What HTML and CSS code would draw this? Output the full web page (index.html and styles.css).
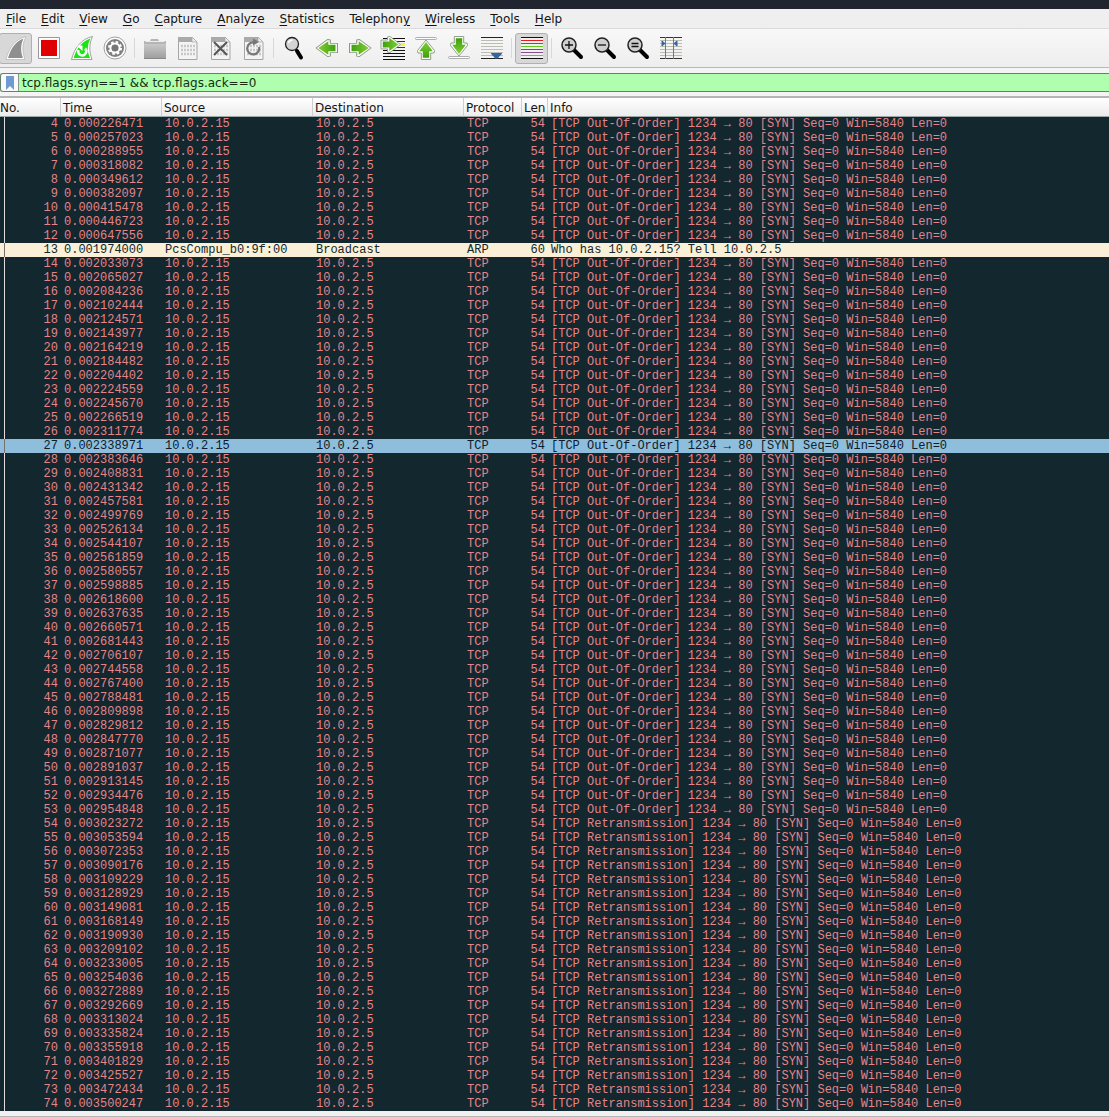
FILE: index.html
```html
<!DOCTYPE html>
<html lang="en">
<head>
<meta charset="utf-8">
<title>Capture</title>
<link rel="stylesheet" href="styles.css">
</head>
<body>
<div class="titlebar"></div>
<nav class="menubar">
  <button><u>F</u>ile</button>
  <button><u>E</u>dit</button>
  <button><u>V</u>iew</button>
  <button><u>G</u>o</button>
  <button><u>C</u>apture</button>
  <button><u>A</u>nalyze</button>
  <button><u>S</u>tatistics</button>
  <button>Telephon<u>y</u></button>
  <button><u>W</u>ireless</button>
  <button><u>T</u>ools</button>
  <button><u>H</u>elp</button>
</nav>
<svg class="defs" width="0" height="0" aria-hidden="true">
  <defs>
    <linearGradient id="green" x1="0" y1="0" x2="0" y2="1"><stop offset="0" stop-color="#7fd035"/><stop offset="1" stop-color="#3f9f0c"/></linearGradient>
    <linearGradient id="folder" x1="0" y1="0" x2="0" y2="1"><stop offset="0" stop-color="#c9c9c9"/><stop offset="1" stop-color="#9c9c9c"/></linearGradient>
    <g id="arrow">
      <path d="M0 -10 L10 0.5 L9.500 3 H5.5 V9.5 H-5.5 V3 H-9.500 L-10 0.5 Z" fill="#fff" stroke="#8a9880" stroke-width="1" stroke-linejoin="round"/>
      <path d="M0 -8 L8 1.200 H3.8 V7.7 H-3.8 V1.200 H-8 Z" fill="url(#green)"/>
    </g>
    <g id="page">
      <path d="M7.5 4.500H21l5 5V26.500H7.500Z" fill="#f4f4f4" stroke="#a5a5a5"/>
      <path d="M7 4h14l5 5H7Z" fill="#aaa"/>
      <path d="M21 4v5h5Z" fill="#eee" stroke="#a5a5a5" stroke-width=".7"/>
      <path d="M10 13h14M10 17h14M10 21h14" stroke="#c8c8c8" stroke-width="2.500" stroke-dasharray="2 1"/>
    </g>
    <g id="lens">
      <path d="M19 17l7 7" stroke="#000" stroke-width="4" stroke-linecap="round"/>
      <circle cx="14" cy="12" r="7" fill="#cfcfcf" stroke="#222" stroke-width="1.500"/>
    </g>
  </defs>
</svg>
<div class="toolbar" role="toolbar">
  <button class="on" aria-label="Start capture"><svg viewBox="0 0 33 30"><path d="M7 26.500C10 15 16 6 27 3.500C23 11 23 18 26 26.500Z" fill="#fff" stroke="#aaa" stroke-width=".6"/><path d="M9 25C12 15 17 8 24.500 5.500C21.500 12 21.500 18 24 25Z" fill="#8f8f8f"/></svg></button>
  <button aria-label="Stop capture"><svg viewBox="0 0 33 30"><path d="M6.500 4.500h21v21h-21Z" fill="#fff" stroke="#999"/><path d="M9 7h16v16H9Z" fill="#e00000"/></svg></button>
  <button aria-label="Restart capture"><svg viewBox="0 0 33 30"><path d="M6.500 26.500C9.500 15 16 6 27.500 3.500C24 11 24 18 27 26.500Z" fill="#fff" stroke="#8a8a8a" stroke-width=".8"/><path d="M8.500 25C12 15 17 8 25.500 5.500C22 12 22 18 25 25Z" fill="#18e610"/><path d="M20 15.500A4 4 0 1 1 13.500 17" fill="none" stroke="#fff" stroke-width="2.500"/><path d="M11.500 12.500h6v5.500Z" fill="#fff"/></svg></button>
  <button aria-label="Capture options"><svg viewBox="0 0 33 30"><circle cx="17" cy="15" r="11" fill="#fff" stroke="#a0a0a0"/><circle cx="17" cy="15" r="9" fill="#808080"/><circle cx="17" cy="15" r="5.500" fill="none" stroke="#fff" stroke-width="3" stroke-dasharray="2.300 2.019"/><circle cx="17" cy="15" r="4.500" fill="none" stroke="#fff" stroke-width="2"/><circle cx="17" cy="15" r="3.300" fill="#777"/></svg></button>
  <span class="sep"></span>
  <button aria-label="Open"><svg viewBox="0 0 33 30"><path d="M6 8h6l1-2h7l1 2h7v18H6Z" fill="#b5b5b5"/><path d="M7.500 8.500h19" stroke="#eee"/><path d="M6 11h22v15H6Z" fill="url(#folder)"/><path d="M6 25.500h22" stroke="#888"/></svg></button>
  <button aria-label="Save"><svg viewBox="0 0 33 30"><use href="#page"/></svg></button>
  <button aria-label="Close file"><svg viewBox="0 0 33 30"><use href="#page"/><path d="M10 9l13 13M23 9L10 22" stroke="#555" stroke-width="2"/></svg></button>
  <button aria-label="Reload"><svg viewBox="0 0 33 30"><use href="#page"/><path d="M22 14a6 6 0 1 1-5-4.500" fill="none" stroke="#777" stroke-width="2.200"/><path d="M16 5.500l6 3.500-6 3.500Z" fill="#777"/></svg></button>
  <span class="sep"></span>
  <button aria-label="Find"><svg viewBox="0 0 33 30"><path d="M18 15l2.500 4" stroke="#444" stroke-width="2"/><path d="M20 18l4 6.500" stroke="#000" stroke-width="4" stroke-linecap="round"/><circle cx="15" cy="11" r="6.500" fill="#d4d4d4" stroke="#222" stroke-width="1.300"/><path d="M11.500 10a4 4 0 0 1 4-3" fill="none" stroke="#fff" stroke-width="1.500"/></svg></button>
  <button aria-label="Previous"><svg viewBox="0 0 33 30"><use href="#arrow" transform="translate(17 15) rotate(-90) scale(.85 1.100)"/></svg></button>
  <button aria-label="Next"><svg viewBox="0 0 33 30"><use href="#arrow" transform="translate(17 15) rotate(90) scale(.85 1.100)"/></svg></button>
  <button aria-label="Go to packet"><svg viewBox="0 0 33 30"><path d="M7 5.500h22M7 17.500h22M7 20.500h22M7 23.500h22M7 26.500h22" stroke="#111"/><path d="M20 8.500h9" stroke="#333"/><path d="M20 11.500h9" stroke="#f6ee50" stroke-width="3"/><path d="M20 14.500h9" stroke="#333"/><use href="#arrow" transform="translate(14.500 11.500) rotate(90) scale(.8 1)"/></svg></button>
  <button aria-label="First packet"><svg viewBox="0 0 33 30"><rect x="6.500" y="4.500" width="21" height="2" rx="1" fill="#fff" stroke="#999" stroke-width=".8"/><use href="#arrow" transform="translate(17 17) scale(.85 1)"/></svg></button>
  <button aria-label="Last packet"><svg viewBox="0 0 33 30"><rect x="6.500" y="23.500" width="21" height="2" rx="1" fill="#fff" stroke="#999" stroke-width=".8"/><use href="#arrow" transform="translate(17 13) rotate(180) scale(.85 1)"/></svg></button>
  <button aria-label="Auto scroll"><svg viewBox="0 0 33 30"><path d="M6 4.500h22M6 25.500h22" stroke="#222"/><path d="M6 7.500h22M6 10.500h22M6 13.500h22M6 16.500h22M6 19.500h22M6 22.500h22" stroke="#bbbdb2"/><path d="M16 20h11c0 2-3 3-4 5.500h-3C19 23 16 22 16 20Z" fill="#3465a4"/></svg></button>
  <span class="sep"></span>
  <button class="on" aria-label="Colorize"><svg viewBox="0 0 33 30"><path d="M6 4h22v22H6Z" fill="#f0f0f0"/><path d="M6 4.500h22M6 25.500h22" stroke="#111"/><path d="M6 7.500h22" stroke="#e02020"/><path d="M6 10.500h22" stroke="#3465a4"/><path d="M6 13.500h22" stroke="#60c820"/><path d="M6 16.500h22" stroke="#3465a4"/><path d="M6 19.500h22" stroke="#85508b"/><path d="M6 22.500h22" stroke="#c89a10"/></svg></button>
  <span class="sep"></span>
  <button aria-label="Zoom in"><svg viewBox="0 0 33 30"><use href="#lens"/><path d="M10 12h8M14 8v8" stroke="#111" stroke-width="1.300"/></svg></button>
  <button aria-label="Zoom out"><svg viewBox="0 0 33 30"><use href="#lens"/><path d="M10 12h8" stroke="#111" stroke-width="1.300"/></svg></button>
  <button aria-label="Normal size"><svg viewBox="0 0 33 30"><use href="#lens"/><path d="M10.500 10.500h7M10.500 13.500h7" stroke="#111" stroke-width="1.300"/></svg></button>
  <button aria-label="Resize columns"><svg viewBox="0 0 33 30"><path d="M6 4.500h22M6 25.500h22" stroke="#333"/><path d="M6 7.500h22M6 10.500h22M6 13.500h22M6 16.500h22M6 19.500h22M6 22.500h22" stroke="#bbbdb2"/><path d="M11.500 4v22M19.500 4v22" stroke="#777"/><path d="M8 8l3 2.500L8 13ZM23 8l-3 2.500 3 2.500Z" fill="#3465a4" stroke="#3465a4"/></svg></button>
</div>
<div class="filter">
  <button aria-label="Bookmarks"><svg viewBox="0 0 10 14"><path d="M1 0h8v14l-4-4-4 4Z" fill="#6f9bd4"/></svg></button>
  <input type="text" aria-label="Display filter" value="tcp.flags.syn==1 &amp;&amp; tcp.flags.ack==0" spellcheck="false">
</div>
<table class="packets">
  <colgroup><col class="c-no"><col class="c-time"><col class="c-addr"><col class="c-addr"><col class="c-proto"><col class="c-len"><col></colgroup>
  <thead><tr><th>No.</th><th>Time</th><th>Source</th><th>Destination</th><th>Protocol</th><th>Len</th><th>Info</th></tr></thead>
  <tbody id="packets"></tbody>
</table>
<div class="splitter"></div>
<script src="packets.js"></script>
</body>
</html>
```
FILE: styles.css
```css
* { box-sizing: border-box; }
body {
  margin: 0;
  background: #f4f4f4;
  color: #141414;
  font: 12px/18px "DejaVu Sans", sans-serif;
}
button { margin: 0; padding: 0; border: 0; background: none; color: inherit; font: inherit; }
.titlebar { height: 9px; background: #21252f; }
.menubar {
  display: flex;
  gap: 15px;
  height: 20px;
  padding-left: 6px;
  background: #efefef;
  border-bottom: 1px solid #dadada;
}
.menubar u { text-underline-offset: 2px; }
.defs { display: block; }
.toolbar {
  display: flex;
  height: 39px;
  margin-left: -1px;
  padding-top: 4px;
  background: linear-gradient(#f8f8f8, #eeeeee);
  border-bottom: 1px solid #a9c3a9;
}
.toolbar button { width: 33px; height: 31px; padding-bottom: 1px; border: 1px solid transparent; border-radius: 3px; }
.toolbar svg { display: block; width: 33px; height: 30px; margin: -1px; }
.toolbar .on { background: #d8d8d8; border-color: #b0b0b0; }
.sep { width: 1px; height: 20px; margin: 5px 3px; background: #d4dad4; }
.filter {
  display: flex;
  height: 19px;
  margin: 5px 0 4px;
  background: #afffaf;
  border: 1px solid #66806a;
  border-right: 0;
  border-radius: 3px 0 0 3px;
}
.filter button { width: 18px; background: #fbfbfb; border-right: 1px solid #8a9a8a; border-radius: 3px 0 0 3px; }
.filter svg { display: block; width: 10px; height: 14px; margin: 0 auto; }
.filter input {
  flex: 1;
  min-width: 0;
  padding: 0 3px;
  border: 0;
  outline: 0;
  background: none;
  color: #12300f;
  font: inherit;
}
.packets { width: 100%; table-layout: fixed; border-collapse: separate; border-spacing: 0; border-top: 2px solid #b5b5b5; }
.c-no { width: 61px; }
.c-time { width: 101px; }
.c-addr { width: 151px; }
.c-proto { width: 58px; }
.c-len { width: 26px; }
th {
  height: 19px;
  padding: 2px 2px 0;
  overflow: hidden;
  background: linear-gradient(#ffffff, #ececec);
  border-right: 1px solid #cfcfcf;
  border-bottom: 1px solid #9aa8a8;
  font-weight: 400;
  line-height: 16px;
  text-align: left;
  white-space: nowrap;
}
th:first-child { padding-left: 0; }
th:last-child { border-right: 0; }
td {
  height: 14px;
  padding: 0 3px;
  font: 12px/14px "Liberation Mono", monospace;
  white-space: pre;
}
td:nth-child(1), td:nth-child(6) { text-align: right; }
td:first-child { background: linear-gradient(#e4dcdc, #e4dcdc) 4px 0 / 1px 100% no-repeat; }
tbody tr { background: #12272e; color: #e58489; }
tbody .arp { background: #faf0d7; color: #12272e; }
tbody .selected { background: #8fbddc; color: #0c1c2c; }
.arp td:first-child, .selected td:first-child { background-image: linear-gradient(#77706c, #77706c); }
.splitter { height: 6px; background: #f0f0f0; border-bottom: 1px solid #b8b4b4; }
```
FILE: packets.js
```javascript
const firstNumber = 4;
const selected = 27;
const firstRetransmission = 54;

// Fractional part of each capture time, one per packet
const times = `
000226471 000257023 000288955 000318082 000349612 000382097 000415478 000446723 000647556 001974000
002033073 002065027 002084236 002102444 002124571 002143977 002164219 002184482 002204402 002224559
002245670 002266519 002311774 002338971 002383646 002408831 002431342 002457581 002499769 002526134
002544107 002561859 002580557 002598885 002618600 002637635 002660571 002681443 002706107 002744558
002767400 002788481 002809898 002829812 002847770 002871077 002891037 002913145 002934476 002954848
003023272 003053594 003072353 003090176 003109229 003128929 003149081 003168149 003190930 003209102
003233005 003254036 003272889 003292669 003313024 003335824 003355918 003401829 003425527 003472434
003500247`.trim().split(/\s+/);

const body = document.getElementById("packets");

times.forEach((time, i) => {
  const no = firstNumber + i;
  const kind = no < firstRetransmission ? "Out-Of-Order" : "Retransmission";
  const row = body.insertRow();
  let cells = ["10.0.2.15", "10.0.2.5", "TCP", 54, `[TCP ${kind}] 1234 → 80 [SYN] Seq=0 Win=5840 Len=0`];
  if (no === 13) {
    row.className = "arp";
    cells = ["PcsCompu_b0:9f:00", "Broadcast", "ARP", 60, "Who has 10.0.2.15? Tell 10.0.2.5"];
  }
  if (no === selected) row.className = "selected";
  [no, "0." + time, ...cells].forEach(text => { row.insertCell().textContent = text; });
});
```
